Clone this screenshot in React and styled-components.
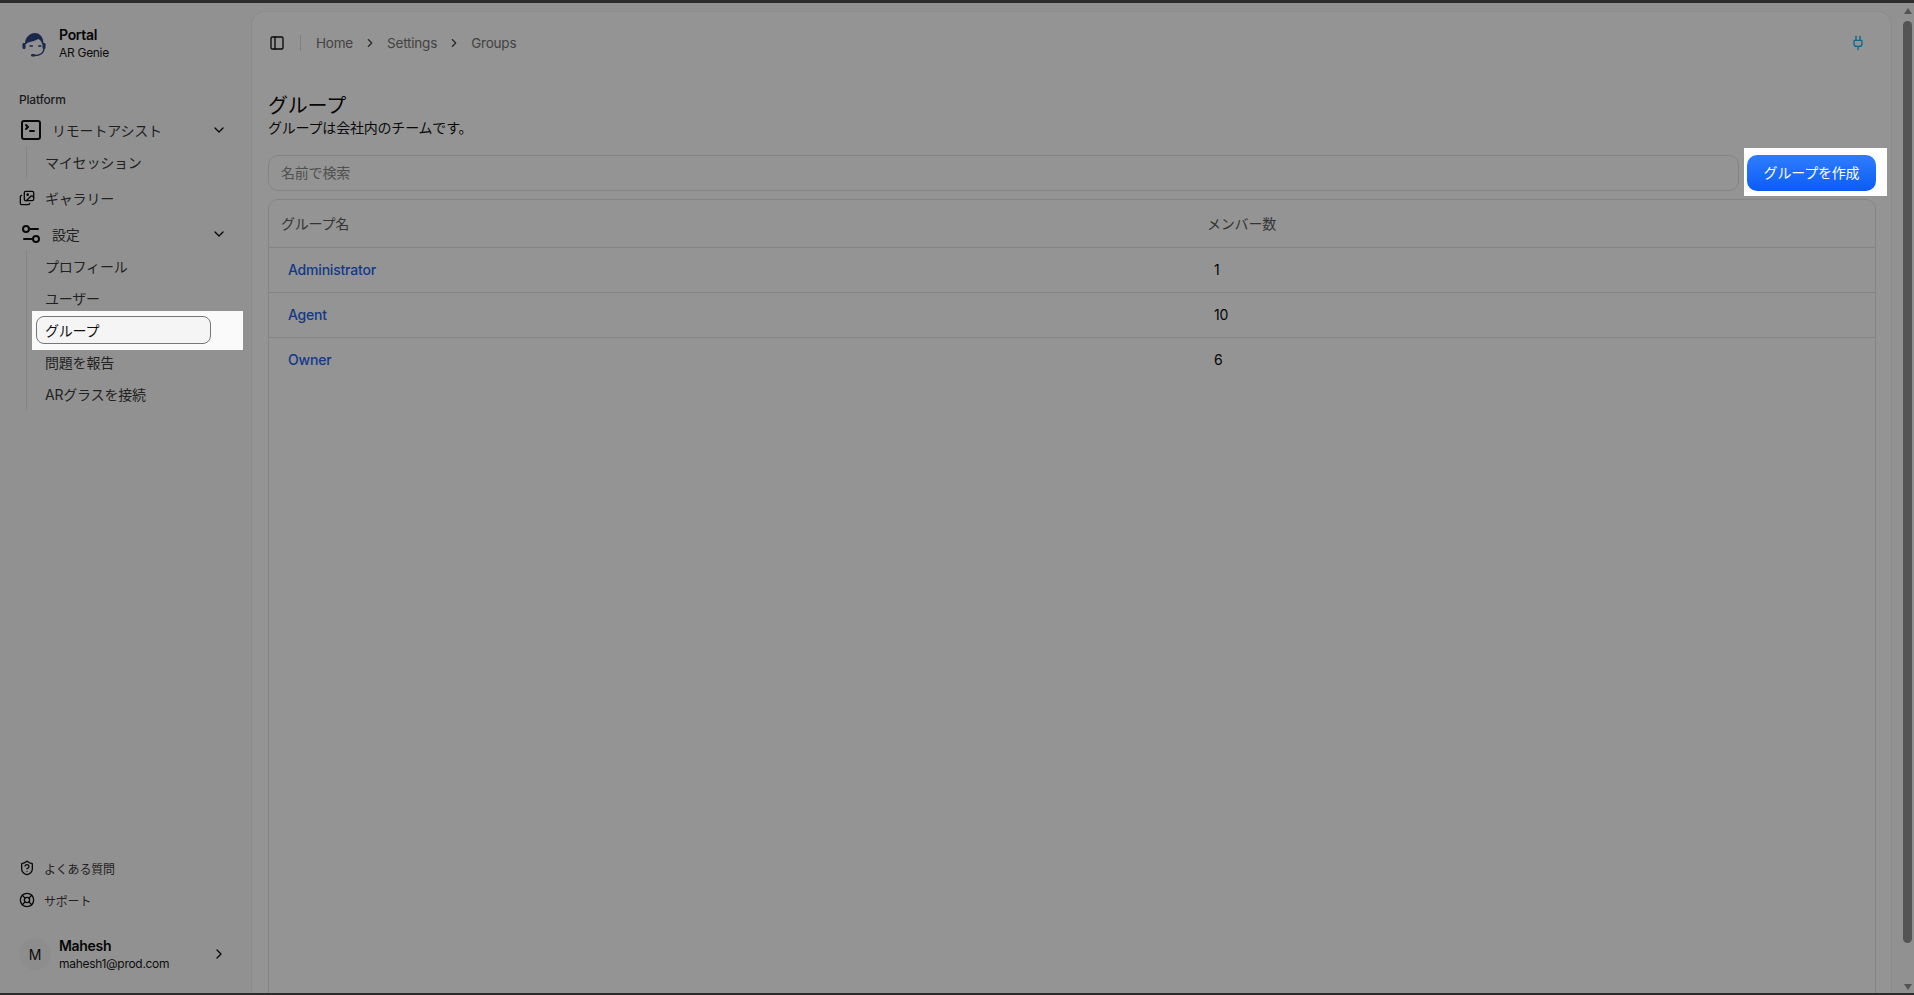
import React from "react";
import styled, { createGlobalStyle } from "styled-components";
import {
  SquareTerminal, Images, Settings2, ChevronDown, ChevronRight,
  ShieldQuestion, LifeBuoy, PanelLeft, Plug,
} from "lucide-react";

const FONT = `Inter, "Noto Sans CJK JP", "Liberation Sans", sans-serif`;

const Global = createGlobalStyle`
  html, body { margin: 0; height: 100%; overflow: hidden; }
  body { font-family: ${FONT}; font-size: 14px; letter-spacing: -0.2px; color: #0a0a0a; background: #fafafa; }
  * { box-sizing: border-box; }
`;

const Page = styled.div`
  height: 100vh;
  display: flex;
  flex-direction: column;
`;
const WindowEdge = styled.div`
  flex: 0 0 ${(p) => p.$h}px;
  background: #2b2b2b;
  position: relative;
  z-index: 30;
`;
const Dim = styled.div`
  position: fixed;
  inset: 0;
  z-index: 10;
  background: rgba(0, 0, 0, 0.42);
`;
const Body = styled.div`
  flex: 1;
  min-height: 0;
  display: flex;
  background: #fafafa;
`;

const Sidebar = styled.aside`
  flex: 0 0 251px;
  display: flex;
  flex-direction: column;
  padding: 23px 24px 23px 19px;
`;
const Brand = styled.div`
  display: flex;
  align-items: center;
  gap: 12px;
  margin-left: 2px;
`;
const BrandText = styled.div`
  display: flex;
  flex-direction: column;
  line-height: 18px;
  letter-spacing: -0.3px;
`;
const BrandName = styled.span`
  font-size: 14px;
  font-weight: 600;
  color: #0a0a0a;
`;
const BrandSub = styled.span`
  font-size: 12px;
  color: #171717;
`;
const GroupLabel = styled.div`
  margin-top: 30px;
  height: 16px;
  line-height: 16px;
  font-size: 12px;
  font-weight: 500;
  color: #333;
`;
const Nav = styled.nav`
  margin-top: 6px;
  display: flex;
  flex-direction: column;
  gap: 3px;
`;
const Row = styled.div`
  height: ${(p) => (p.$tall ? 34 : 32)}px;
  display: flex;
  align-items: center;
  gap: ${(p) => (p.$small ? 10 : 9)}px;
  color: #3a3a3a;
  svg { flex: none; color: #111; }
`;
const RowLabel = styled.span`
  flex: 1;
`;
const Caret = styled(ChevronDown)`
  color: #222;
`;
const SubList = styled.div`
  margin-left: 7px;
  padding: 2px 0 2px 9px;
  border-left: 1px solid #e3e3e3;
  display: flex;
  flex-direction: column;
  gap: 4px;
`;
const SubItem = styled.div`
  height: 28px;
  padding-left: 9px;
  display: flex;
  align-items: center;
  color: #3a3a3a;
`;
const Spotlight = styled.div`
  position: relative;
  z-index: 20;
  background: #fafafa;
  margin: -5px -16px -6px -4px;
  padding: 5px 32px 6px 4px;
`;
const ActivePill = styled(SubItem)`
  background: #f5f5f5;
  border: 1px solid #777;
  border-radius: 8px;
  padding-left: 8px;
  color: #111;
`;
const Footer = styled.div`
  margin-top: auto;
  display: flex;
  flex-direction: column;
`;
const FootRow = styled.div`
  height: 32px;
  display: flex;
  align-items: center;
  gap: 9px;
  font-size: 12px;
  color: #3a3a3a;
  svg { color: #111; flex: none; }
`;
const User = styled.div`
  margin-top: 22px;
  height: 32px;
  display: flex;
  align-items: center;
  gap: 8px;
  svg { color: #111; }
`;
const Avatar = styled.div`
  width: 32px;
  height: 32px;
  border-radius: 50%;
  background: #f3f3f3;
  display: flex;
  align-items: center;
  justify-content: center;
  color: #111;
`;
const UserText = styled.div`
  flex: 1;
  display: flex;
  flex-direction: column;
  letter-spacing: -0.3px;
`;
const UserName = styled.span`
  font-size: 14px;
  font-weight: 600;
  line-height: 18px;
`;
const UserMail = styled.span`
  font-size: 12px;
  line-height: 17px;
  color: #171717;
`;

const Panel = styled.main`
  flex: 1;
  min-width: 0;
  margin-top: 8px;
  background: #fff;
  border: 1px solid #efefef;
  border-bottom: 0;
  border-radius: 14px 14px 0 0;
  display: flex;
  flex-direction: column;
  overflow: hidden;
`;
const TopBar = styled.header`
  flex: 0 0 62px;
  display: flex;
  align-items: center;
  padding: 0 25px 0 17px;
  svg { flex: none; }
`;
const Divider = styled.span`
  width: 1px;
  height: 16px;
  background: #dedede;
  margin: 0 15px 0 15px;
`;
const Crumbs = styled.div`
  flex: 1;
  display: flex;
  align-items: center;
  gap: 10px;
  font-size: 13.5px;
  color: #737373;
  svg { color: #444; }
`;
const Content = styled.div`
  flex: 1;
  min-height: 0;
  padding: 20px 15px 0 16px;
  display: flex;
  flex-direction: column;
`;
const Title = styled.h1`
  margin: 0;
  font-size: 20px;
  font-weight: 400;
  line-height: 24px;
`;
const Subtitle = styled.p`
  margin: 0;
  line-height: 20px;
  color: #111;
`;
const Toolbar = styled.div`
  margin-top: 17px;
  display: flex;
  gap: 8px;
`;
const Search = styled.input`
  flex: 1;
  height: 36px;
  padding: 0 12px 2px;
  border: 1px solid #e2e2e2;
  border-radius: 10px;
  background: #fff;
  font: inherit;
  letter-spacing: inherit;
  outline: none;
  &::placeholder { color: #8a8a8a; opacity: 1; }
`;
const ButtonSpot = styled.div`
  position: relative;
  z-index: 20;
  background: #fff;
  margin: -7px -11px -5px -3px;
  padding: 7px 11px 5px 3px;
`;
const CreateButton = styled.button`
  display: block;
  width: 129px;
  height: 36px;
  padding: 0 0 2px;
  border: 0;
  border-radius: 10px;
  background: linear-gradient(180deg, #2f7dff 0%, #0b5cf7 100%);
  color: #fff;
  font: inherit;
  letter-spacing: inherit;
`;
const Card = styled.div`
  margin-top: 8px;
  height: 900px;
  flex: none;
  border: 1px solid #e4e4e4;
  border-radius: 10px;
`;
const Table = styled.table`
  width: 100%;
  border-collapse: collapse;
  table-layout: fixed;
`;
const Th = styled.th`
  height: 47px;
  padding: 0 0 1px 12px;
  text-align: left;
  font-weight: 400;
  color: #5c5c5c;
  border-bottom: 1px solid #e4e4e4;
  &:first-child { width: 926px; }
`;
const Tr = styled.tr`
  &:not(:last-child) td { border-bottom: 1px solid #e4e4e4; }
`;
const Td = styled.td`
  height: 45px;
  padding: 0 0 0 19px;
`;
const GroupLink = styled.a`
  color: #2563eb;
  font-weight: 500;
`;

const ScrollGutter = styled.div`
  flex: 0 0 22px;
  padding: 5px 2px 3px 11px;
  display: flex;
  flex-direction: column;
  align-items: center;
  justify-content: space-between;
`;
const ArrowUp = styled.div`
  flex: none;
  width: 0;
  height: 0;
  border-left: 4px solid transparent;
  border-right: 4px solid transparent;
  border-bottom: 6px solid #919191;
`;
const ArrowDown = styled(ArrowUp)`
  border-bottom: 0;
  border-top: 6px solid #919191;
`;
const Thumb = styled.div`
  flex: none;
  width: 9px;
  height: 922px;
  margin: 7px 0 auto;
  background: #919191;
  border-radius: 5px;
`;

function Logo() {
  return (
    <svg width="26" height="26" viewBox="0 0 26 26" aria-hidden="true">
      <path d="M4 13 C4 6 9 2 14 2 C19 2 22.5 6 22.5 13 L21 13 C20.5 10.5 19 8.5 17.3 8 C14 10 10 10.5 6 12 L5.5 13 Z" fill="#2b4684" />
      <rect x="1.5" y="12" width="3" height="6" rx="1.2" fill="#2b4684" />
      <rect x="21.5" y="12" width="3" height="6" rx="1.2" fill="#2b4684" />
      <path d="M9 15 h2.4 M17.6 15 h2.4" stroke="#2b4684" strokeWidth="1.3" strokeLinecap="round" />
      <path d="M23 18 C22.5 22.5 18 24.6 12.5 24.4" stroke="#2b4684" strokeWidth="1.5" fill="none" />
      <rect x="10" y="23" width="4" height="2.6" rx="1.3" fill="#2b4684" />
    </svg>
  );
}

const PLATFORM_SUB = ["プロフィール", "ユーザー"];
const SETTINGS_TAIL = ["問題を報告", "ARグラスを接続"];
const GROUPS = [
  { name: "Administrator", count: 1 },
  { name: "Agent", count: 10 },
  { name: "Owner", count: 6 },
];

export default function App() {
  return (
    <Page>
      <Global />
      <Dim />
      <WindowEdge $h={3} />
      <Body>
        <Sidebar>
          <Brand>
            <Logo />
            <BrandText>
              <BrandName>Portal</BrandName>
              <BrandSub>AR Genie</BrandSub>
            </BrandText>
          </Brand>
          <GroupLabel>Platform</GroupLabel>
          <Nav>
            <div>
              <Row>
                <SquareTerminal size={24} strokeWidth={2} />
                <RowLabel>リモートアシスト</RowLabel>
                <Caret size={16} />
              </Row>
              <SubList>
                <SubItem>マイセッション</SubItem>
              </SubList>
            </div>
            <Row $tall $small>
              <Images size={16} />
              <RowLabel>ギャラリー</RowLabel>
            </Row>
            <div>
              <Row>
                <Settings2 size={24} strokeWidth={2} />
                <RowLabel>設定</RowLabel>
                <Caret size={16} />
              </Row>
              <SubList>
                {PLATFORM_SUB.map((t) => <SubItem key={t}>{t}</SubItem>)}
                <Spotlight>
                  <ActivePill>グループ</ActivePill>
                </Spotlight>
                {SETTINGS_TAIL.map((t) => <SubItem key={t}>{t}</SubItem>)}
              </SubList>
            </div>
          </Nav>
          <Footer>
            <FootRow><ShieldQuestion size={16} />よくある質問</FootRow>
            <FootRow><LifeBuoy size={16} />サポート</FootRow>
            <User>
              <Avatar>M</Avatar>
              <UserText>
                <UserName>Mahesh</UserName>
                <UserMail>mahesh1@prod.com</UserMail>
              </UserText>
              <ChevronRight size={16} />
            </User>
          </Footer>
        </Sidebar>
        <Panel>
          <TopBar>
            <PanelLeft size={16} color="#111" />
            <Divider />
            <Crumbs>
              <span>Home</span>
              <ChevronRight size={14} />
              <span>Settings</span>
              <ChevronRight size={14} />
              <span>Groups</span>
            </Crumbs>
            <Plug size={16} color="#1ab0f5" />
          </TopBar>
          <Content>
            <Title>グループ</Title>
            <Subtitle>グループは会社内のチームです。</Subtitle>
            <Toolbar>
              <Search placeholder="名前で検索" />
              <ButtonSpot>
                <CreateButton>グループを作成</CreateButton>
              </ButtonSpot>
            </Toolbar>
            <Card>
              <Table>
                <thead>
                  <tr>
                    <Th>グループ名</Th>
                    <Th>メンバー数</Th>
                  </tr>
                </thead>
                <tbody>
                  {GROUPS.map((g) => (
                    <Tr key={g.name}>
                      <Td><GroupLink>{g.name}</GroupLink></Td>
                      <Td>{g.count}</Td>
                    </Tr>
                  ))}
                </tbody>
              </Table>
            </Card>
          </Content>
        </Panel>
        <ScrollGutter>
          <ArrowUp />
          <Thumb />
          <ArrowDown />
        </ScrollGutter>
      </Body>
      <WindowEdge $h={2} />
    </Page>
  );
}
